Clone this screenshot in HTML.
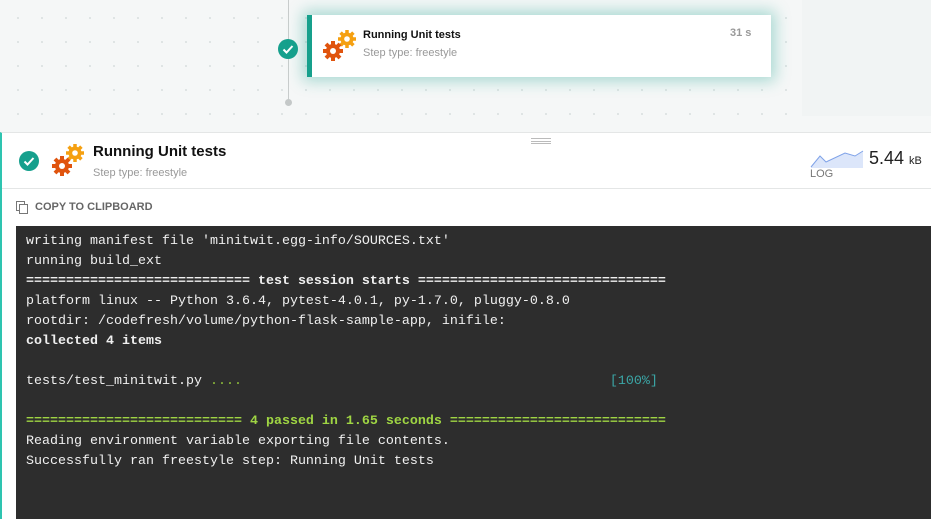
<!DOCTYPE html>
<html><head><style>
*{margin:0;padding:0;box-sizing:border-box}
body{width:931px;height:519px;overflow:hidden;background:#fff;font-family:"Liberation Sans",sans-serif;position:relative}
.top{position:absolute;left:0;top:0;width:931px;height:132px;background-color:#f5f7f7;background-image:radial-gradient(circle,#dde3e3 1px,transparent 1.2px);background-size:24px 24px;background-position:6px 6px}
.topr{position:absolute;left:802px;top:0;width:129px;height:116px;background:#f1f4f4}
.vline{position:absolute;left:288px;top:0;width:1px;height:102px;background:#c8cccc}
.dot{position:absolute;left:285px;top:99px;width:7px;height:7px;border-radius:50%;background:#c4c8c8}
.card{position:absolute;left:307px;top:15px;width:464px;height:62px;background:#fff;border-left:5px solid #17a08c;box-shadow:0 0 14px 4px rgba(23,160,140,.35)}
.check{position:absolute;border-radius:50%;background:#16a08d}
.panel{position:absolute;left:0;top:132px;width:931px;height:387px;background:#fff;border-left:2px solid #2ec4b0;border-top:1px solid #e4e6e6}
.term{position:absolute;left:16px;top:226px;width:915px;height:293px;background:#2d2d2d;font-family:"Liberation Mono",monospace;font-size:13.33px;color:#f0f0f0;padding:6px 0 0 10px;line-height:20px;white-space:pre}
b{font-weight:bold}
.g{color:#8fbf3a}.c{color:#3ba6a6}.gb{color:#9fd543;font-weight:bold}
</style></head><body>
<div class="top"></div><div class="topr"></div>
<div class="vline"></div><div class="dot"></div>
<div class="check" style="left:278px;top:39px;width:20px;height:20px"><svg width="20" height="20"><path d="M5.5 10.5l3 3 6-6.5" stroke="#fff" stroke-width="2" fill="none"/></svg></div>
<div class="card">
<svg style="position:absolute;left:10px;top:14px" width="36" height="34" viewBox="0 0 36 34"><g fill="#f5a011"><circle cx="25" cy="10" r="6.5"/><g stroke="#f5a011" stroke-width="3.5"><path d="M25 1v18M16 10h18M18.6 3.6l12.8 12.8M31.4 3.6L18.6 16.4"/></g></g><circle cx="25" cy="10" r="2.8" fill="#fff"/><g fill="#e0540e"><circle cx="11" cy="22" r="7"/><g stroke="#e0540e" stroke-width="4"><path d="M11 12v20M1 22h20M4 15l14 14M18 15L4 29"/></g></g><circle cx="11" cy="22" r="3" fill="#fff"/></svg>
<div style="position:absolute;left:51px;top:14px;font-size:11px;font-weight:bold;color:#111">Running Unit tests</div>
<div style="position:absolute;left:51px;top:32px;font-size:11px;color:#999">Step type: freestyle</div>
<div style="position:absolute;left:418px;top:12px;font-size:11px;font-weight:bold;color:#999">31 s</div>
</div>
<div class="panel"></div>
<div style="position:absolute;left:531px;top:138px;width:20px;height:6px;border-top:1px solid #bbb;border-bottom:1px solid #bbb"></div>
<div style="position:absolute;left:531px;top:141px;width:20px;height:1px;background:#bbb"></div>
<div class="check" style="left:19px;top:151px;width:20px;height:20px"><svg width="20" height="20"><path d="M5.5 10.5l3 3 6-6.5" stroke="#fff" stroke-width="2" fill="none"/></svg></div>
<svg style="position:absolute;left:51px;top:143px" width="36" height="34" viewBox="0 0 36 34"><g fill="#f5a011"><circle cx="24" cy="10" r="6.5"/><g stroke="#f5a011" stroke-width="3.5"><path d="M24 1v18M15 10h18M17.6 3.6l12.8 12.8M30.4 3.6L17.6 16.4"/></g></g><circle cx="24" cy="10" r="2.8" fill="#fff"/><g fill="#e0540e"><circle cx="11" cy="23" r="7"/><g stroke="#e0540e" stroke-width="4"><path d="M11 13v20M1 23h20M4 16l14 14M18 16L4 30"/></g></g><circle cx="11" cy="23" r="3" fill="#fff"/></svg>
<div style="position:absolute;left:93px;top:143px;font-size:15px;font-weight:bold;color:#111">Running Unit tests</div>
<div style="position:absolute;left:93px;top:167px;font-size:11px;color:#999">Step type: freestyle</div>
<svg style="position:absolute;left:810px;top:150px" width="54" height="18"><path d="M1 17L10 6 16 12 35 3 45 6 53 1V18H1Z" fill="#dce6fa"/><path d="M1 17L10 6 16 12 35 3 45 6 53 1" stroke="#7fa2e8" fill="none"/></svg>
<div style="position:absolute;left:810px;top:168px;font-size:11px;color:#777">LOG</div>
<div style="position:absolute;left:869px;top:148px;font-size:18px;color:#222">5.44 <span style="font-size:11px">kB</span></div>
<div style="position:absolute;left:2px;top:188px;width:929px;height:1px;background:#e4e6e6"></div>
<svg style="position:absolute;left:16px;top:201px" width="12" height="13"><rect x="0.5" y="0.5" width="8" height="9" fill="none" stroke="#777"/><rect x="3.5" y="3.5" width="8" height="9" fill="#fff" stroke="#777"/></svg>
<div style="position:absolute;left:35px;top:201px;font-size:11px;font-weight:bold;color:#666">COPY TO CLIPBOARD</div>
<div class="term">writing manifest file 'minitwit.egg-info/SOURCES.txt'
running build_ext
<b>============================ test session starts ===============================</b>
platform linux -- Python 3.6.4, pytest-4.0.1, py-1.7.0, pluggy-0.8.0
rootdir: /codefresh/volume/python-flask-sample-app, inifile:
<b>collected 4 items</b>

tests/test_minitwit.py <span class="g">....</span>                                              <span class="c">[100%]</span>

<span class="gb">=========================== 4 passed in 1.65 seconds ===========================</span>
Reading environment variable exporting file contents.
Successfully ran freestyle step: Running Unit tests</div>
</body></html>
